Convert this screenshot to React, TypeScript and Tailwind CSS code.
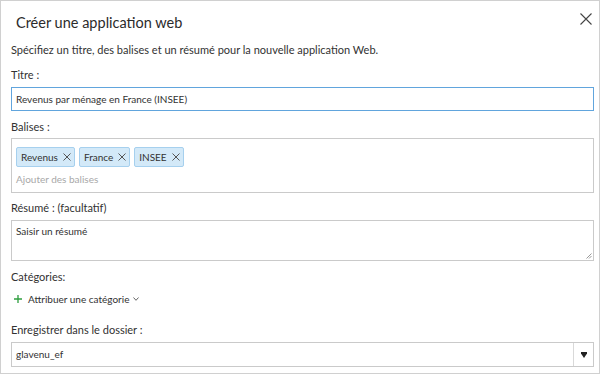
import React from 'react';

function Tag({ label }: { label: string }) {
  return (
    <span className="flex items-center h-[20px] pl-[4px] pr-[3px] bg-[#d3e9f8] border border-[#a6d0ee] rounded-[2px] text-[10px] text-[#323232]">
      {label}
      <svg width="8" height="8" viewBox="0 0 8 8" className="stroke-[#555] ml-[5px]">
        <path d="M0.5 0.5 L7.5 7.5 M7.5 0.5 L0.5 7.5" strokeWidth="1" />
      </svg>
    </span>
  );
}

export default function App() {
  return (
    <div
      className="w-[600px] h-[374px] bg-white border border-[#d0d0d0] text-[#323232] overflow-hidden"
      style={{ fontFamily: '"Lato", "Open Sans", sans-serif' }}
    >
      <div className="flex items-center justify-between h-[42px] pl-[15px] pr-[7px] pt-[1px]">
        <h1 className="text-[14.5px] text-[#2b2b2b]">Créer une application web</h1>
        <svg width="12" height="12" viewBox="0 0 12 12" className="stroke-[#444] mb-[8px]">
          <path d="M0.5 0.5 L11.5 11.5 M11.5 0.5 L0.5 11.5" strokeWidth="1.1" />
        </svg>
      </div>

      <div className="pl-[10px] pr-[5px] text-[11px]">
        <p className="h-[14px] leading-[14px]">Spécifiez un titre, des balises et un résumé pour la nouvelle application Web.</p>

        <p className="mt-[11px] h-[14px] leading-[14px]">Titre :</p>
        <div className="mt-[5px] h-[24px] border border-[#61a5dd] flex items-center px-[4px] text-[10px]">
          Revenus par ménage en France (INSEE)
        </div>

        <p className="mt-[9px] h-[14px] leading-[14px]">Balises :</p>
        <div className="mt-[4px] h-[55px] border border-[#cacaca] px-[4px] pt-[8px]">
          <div className="flex gap-[4px]">
            <Tag label="Revenus" />
            <Tag label="France" />
            <Tag label="INSEE" />
          </div>
          <p className="mt-[6px] text-[10px] text-[#a8a8a8] leading-[13px]">Ajouter des balises</p>
        </div>

        <p className="mt-[8px] h-[14px] leading-[14px]">Résumé : (facultatif)</p>
        <div className="relative mt-[5px] h-[41px] border border-[#cacaca] px-[4px] pt-[4px] text-[10px] leading-[13px]">
          Saisir un résumé
          <svg width="6" height="6" viewBox="0 0 6 6" className="absolute right-[1px] bottom-[1px] stroke-[#999]">
            <path d="M5.5 0.5 L0.5 5.5 M5.5 3 L3 5.5" strokeWidth="1" />
          </svg>
        </div>

        <p className="mt-[9px] h-[14px] leading-[14px]">Catégories:</p>
        <div className="mt-[8px] flex items-center h-[14px] text-[10px]">
          <svg width="8" height="8" viewBox="0 0 8 8" className="stroke-[#2f9e3f] ml-[3px] mr-[6px]">
            <path d="M4 0 V8 M0 4 H8" strokeWidth="1.3" />
          </svg>
          Attribuer une catégorie
          <svg width="6" height="4" viewBox="0 0 6 4" className="stroke-[#555] ml-[4px]">
            <path d="M0.5 0.5 L3 3.3 L5.5 0.5" strokeWidth="0.9" fill="none" />
          </svg>
        </div>

        <p className="mt-[17px] h-[14px] leading-[14px]">Enregistrer dans le dossier :</p>
        <div className="mt-[5px] h-[25px] border border-[#cacaca] flex text-[10px]">
          <div className="flex-1 flex items-center px-[4px]">glavenu_ef</div>
          <div className="w-[20px] border-l border-[#d9d9d9] flex items-center justify-center">
            <svg width="6" height="6" viewBox="0 0 6 6" className="fill-[#222]">
              <path d="M0 0 H6 V1.5 L3 6 L0 1.5 Z" />
            </svg>
          </div>
        </div>
      </div>
    </div>
  );
}
